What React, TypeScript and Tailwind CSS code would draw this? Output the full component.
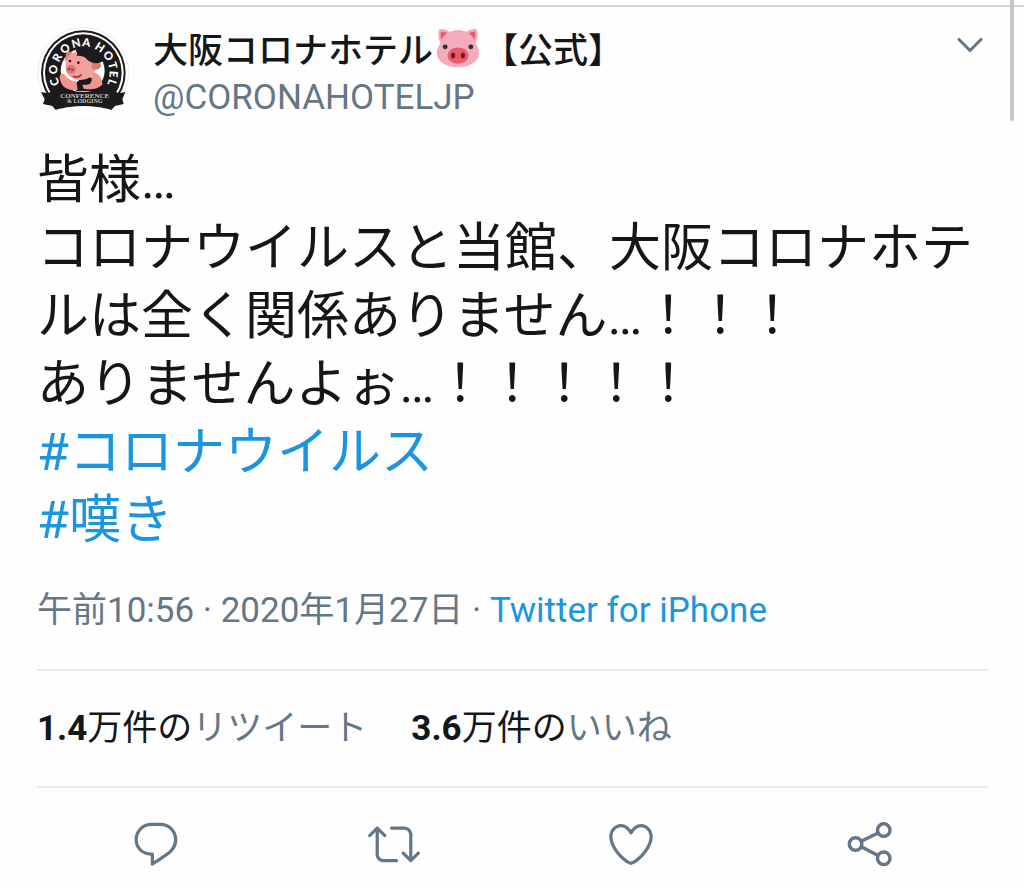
import React from 'react';
import { ChevronDown } from 'lucide-react';

interface Stat {
    count: string;
    unit: string;
    label: string;
}

interface Action {
    label: string;
    icon: React.ReactNode;
}

const bodyLines = [
    '皆様…',
    'コロナウイルスと当館、大阪コロナホテルは全く関係ありません…！！！',
    'ありませんよぉ…！！！！！',
];

const hashtags = ['#コロナウイルス', '#嘆き'];

const stats: Stat[] = [
    { count: '1.4', unit: '万件の', label: 'リツイート' },
    { count: '3.6', unit: '万件の', label: 'いいね' },
];

// Letters around the badge, angle in degrees from the top
const badgeLetters: Array<[string, number]> = [
    ['C', -108],
    ['O', -84],
    ['R', -60],
    ['O', -37],
    ['N', -14],
    ['A', 6],
    ['H', 33],
    ['O', 56],
    ['T', 76],
    ['E', 93],
    ['L', 109],
];

const Avatar: React.FC = () => (
    <svg viewBox="18 21 276 276" className="size-[92px] shrink-0" role="img" aria-label="大阪コロナホテル">
        <circle cx="157" cy="158" r="136" fill="#fff" stroke="#ececec" strokeWidth="3" />
        <circle cx="157" cy="158" r="127" fill="#1d1a1b" />
        <circle cx="157" cy="158" r="121" fill="#fff" />
        <circle cx="157" cy="158" r="115" fill="#1d1a1b" />
        <circle cx="155" cy="152" r="66" fill="#fff" />
        {/* Pig */}
        <path d="M132 200c4-18 20-28 40-28 22 0 38 10 44 30l-10 12h-70z" fill="#1d1a1b" />
        <path d="M88 164c6-8 14 0 18 6 8 8 16 14 30 14l4 26c-26 4-46-8-50-24-4-8-6-16-2-22z" fill="#f0958f" />
        <path d="M182 158c18-4 32 12 32 36-14 14-36 16-56 12l-4-12c16 2 26-2 28-12z" fill="#f0958f" />
        <path d="M101 124l6-34 28 14z" fill="#dd7773" />
        <path d="M116 104c24-18 72-6 78 26 4 28-16 50-46 50-28 0-44-16-44-42 0-16 4-26 12-34z" fill="#f2a09b" />
        <path d="M184 126c14-6 26 2 26 12-4 12-18 14-28 8z" fill="#dd7773" />
        <path d="M134 92c14-22 56-24 70 4 8 4 12 14 12 28-16 10-38 6-50-8-8-8-20-10-30-8 4-6 4-10-2-16z" fill="#1d1a1b" />
        <ellipse cx="120" cy="148" rx="15" ry="13" fill="#dd7773" />
        <circle cx="115" cy="147" r="3" fill="#6f2f2f" />
        <circle cx="124" cy="149" r="3" fill="#6f2f2f" />
        <circle cx="117" cy="123" r="4" fill="#1d1a1b" />
        <circle cx="142" cy="128" r="4" fill="#1d1a1b" />
        <path d="M126 168q14 8 26-4" fill="none" stroke="#a3333a" strokeWidth="5" />
        {/* Ribbon */}
        <path d="M30 216l20 4 16-8q91 8 182 0l16 8 19-4-9 22 4 14-26 6-11 12q-83-24-167 0l-10-12-28-6 5-14z" fill="#1d1a1b" />
        <path d="M74 270q83-24 167 0-34 24-84 24t-83-24z" fill="#fff" />
        {badgeLetters.map(([letter, angle], i) => (
            <text
                key={i}
                x="157"
                y="79"
                textAnchor="middle"
                transform={`rotate(${angle} 157 158)`}
                fill="#fff"
                className="font-['Lato',sans-serif] text-[34px] font-black"
            >
                {letter}
            </text>
        ))}
        <text x="161" y="233" textAnchor="middle" fill="#c9c5c3" className="font-['Liberation_Serif',serif] text-[21px] font-bold">
            CONFERENCE
        </text>
        <text x="161" y="249" textAnchor="middle" fill="#c9c5c3" className="font-['Liberation_Serif',serif] text-[18px] font-bold">
            &amp; LODGING
        </text>
    </svg>
);

const PigEmoji: React.FC = () => (
    <svg viewBox="0 0 36 36" className="mx-1 mb-2 size-[42px] shrink-0" role="img" aria-label="ブタ">
        <path d="M34.2 2.4c-.8-1.4-6.2-.6-9.5 2l8.2 9.6c2-3.2 2.6-9.3 1.3-11.6zM1.8 2.4c.8-1.4 6.2-.6 9.5 2L3.1 14C1.1 10.800.5 4.7 1.8 2.4z" fill="#f4abba" />
        <path d="M32.5 4.1c-1.500-.4-4.400.3-6.200 1.600l5.600 5.800c1-2.200 1.200-5.600.6-7.400zM3.500 4.100c1.500-.4 4.400.3 6.200 1.600l-5.600 5.800c-1-2.200-1.200-5.600-.6-7.400z" fill="#ea596e" />
        <path d="M18 2.500C26 2.500 33 8 33.500 15c2 2 2.500 5 2.500 7.500C36 29.500 28.500 34.500 18 34.500S0 29.500 0 22.500C0 20 .5 17 2.500 15 3 8 10 2.500 18 2.500z" fill="#f4abba" />
        <circle cx="7" cy="17" r="2.1" fill="#292f33" />
        <circle cx="29" cy="17" r="2.1" fill="#292f33" />
        <ellipse cx="18" cy="24.5" rx="9" ry="7" fill="#ea596e" />
        <ellipse cx="13.8" cy="24.5" rx="1.8" ry="2.6" fill="#662113" />
        <ellipse cx="22.2" cy="24.5" rx="1.8" ry="2.6" fill="#662113" />
    </svg>
);

const actions: Action[] = [
    {
        label: '返信',
        icon: (
            <path d="M14.046 2.242l-4.148-.01h-.002c-4.374 0-7.8 3.427-7.8 7.802 0 4.098 3.186 7.206 7.465 7.37v3.828c0 .108.044.286.12.403.142.225.384.347.632.347.138 0 .277-.038.402-.118.264-.168 6.473-4.14 8.088-5.506 1.902-1.61 3.04-3.97 3.043-6.312v-.017c-.006-4.367-3.43-7.787-7.8-7.788zm3.787 12.972c-1.134.96-4.862 3.405-6.772 4.643V16.67c0-.414-.335-.75-.75-.75h-.396c-3.66 0-6.318-2.476-6.318-5.886 0-3.534 2.768-6.302 6.3-6.302l4.147.01h.002c3.532 0 6.3 2.766 6.302 6.296-.003 1.91-.942 3.844-2.514 5.176z" />
        ),
    },
    {
        label: 'リツイート',
        icon: (
            <path d="M23.77 15.67c-.292-.293-.767-.293-1.06 0l-2.22 2.22V7.65c0-2.068-1.683-3.75-3.75-3.75h-5.85c-.414 0-.75.336-.75.75s.336.75.75.75h5.85c1.24 0 2.25 1.01 2.25 2.25v10.24l-2.22-2.22c-.293-.293-.768-.293-1.06 0s-.294.768 0 1.06l3.5 3.5c.145.147.337.22.53.22s.383-.072.53-.22l3.5-3.5c.294-.292.294-.767 0-1.06zm-10.66 3.28H7.26c-1.24 0-2.25-1.01-2.25-2.25V6.46l2.22 2.22c.148.147.34.22.532.22s.384-.073.53-.22c.293-.293.293-.768 0-1.06l-3.5-3.5c-.293-.294-.768-.294-1.06 0l-3.5 3.5c-.294.292-.294.767 0 1.06s.767.293 1.06 0l2.22-2.22V16.7c0 2.068 1.683 3.75 3.75 3.75h5.85c.414 0 .75-.336.75-.75s-.337-.75-.75-.75z" />
        ),
    },
    {
        label: 'いいね',
        icon: (
            <path d="M12 21.638h-.014C9.403 21.59 1.95 14.856 1.95 8.478c0-3.064 2.525-5.754 5.403-5.754 2.29 0 3.83 1.58 4.646 2.73.814-1.148 2.354-2.73 4.645-2.73 2.88 0 5.404 2.69 5.404 5.755 0 6.376-7.454 13.11-10.037 13.157H12zM7.354 4.225c-2.08 0-3.903 1.988-3.903 4.255 0 5.74 7.034 11.596 8.55 11.658 1.518-.062 8.55-5.917 8.55-11.658 0-2.267-1.823-4.255-3.903-4.255-2.528 0-3.94 2.936-3.952 2.965-.23.562-1.156.562-1.387 0-.014-.03-1.425-2.965-3.954-2.965z" />
        ),
    },
    {
        label: '共有',
        icon: (
            <g fill="none" stroke="currentColor" strokeWidth="1.6">
                <circle cx="5.8" cy="12" r="2.9" />
                <circle cx="18.8" cy="5.6" r="2.9" />
                <circle cx="18.8" cy="18.6" r="2.9" />
                <path d="M8.4 10.7l7.8-3.8M8.4 13.3l7.8 4" />
            </g>
        ),
    },
];

const App: React.FC = () => {
    return (
        <div
            lang="ja"
            className="relative min-h-screen bg-[#fefefe] pt-[5px] font-['Roboto','Noto_Sans_CJK_JP',sans-serif] text-[#14171a]"
        >
            {/* Scroll indicator */}
            <div className="absolute top-0 right-[10px] h-[121px] w-1 rounded-b-full bg-[#c6c7c8]"></div>

            <article className="border-t-2 border-[#ccd6dd] pt-5 pr-9 pl-[37px]">
                <header className="flex items-start gap-6">
                    <Avatar />
                    <div className="min-w-0 flex-1 pt-0.5">
                        <h1 className="flex h-[46px] items-center text-[35px] leading-[46px] font-medium">
                            <span>大阪コロナホテル</span>
                            <PigEmoji />
                            <span>【公式】</span>
                        </h1>
                        <p className="text-[35px] leading-[46px] text-[#657786]">@CORONAHOTELJP</p>
                    </div>
                    <button type="button" aria-label="メニュー" className="-mt-1 -mr-1 text-[#657786]">
                        <ChevronDown className="size-11" strokeWidth={1.7} />
                    </button>
                </header>

                <div className="mt-[26px] text-[52px] leading-[68px]">
                    {bodyLines.map((line) => (
                        <p key={line}>{line}</p>
                    ))}
                    {hashtags.map((tag) => (
                        <p key={tag}>
                            <a href="#" className="text-[#1b95e0]">{tag}</a>
                        </p>
                    ))}
                </div>

                <p className="mt-[34px] border-b-2 border-[#e6ecf0] pb-9 text-[35px] leading-[44px] text-[#657786]">
                    午前10:56 · 2020年1月27日 ·{' '}
                    <a href="#" className="text-[#1b95e0]">Twitter for iPhone</a>
                </p>

                <div className="flex gap-11 border-b-2 border-[#e6ecf0] pt-9 pb-[35px] text-[35px] leading-[44px]">
                    {stats.map((stat) => (
                        <a key={stat.label} href="#">
                            <span className="font-bold">{stat.count}</span>
                            <span>{stat.unit}</span>
                            <span className="text-[#657786]">{stat.label}</span>
                        </a>
                    ))}
                </div>

                <div className="grid grid-cols-4 justify-items-center pt-[30px]">
                    {actions.map((action) => (
                        <button key={action.label} type="button" aria-label={action.label} className="text-[#657786]">
                            <svg viewBox="0 0 24 24" className="size-[52px] fill-current">
                                {action.icon}
                            </svg>
                        </button>
                    ))}
                </div>
            </article>
        </div>
    );
};

export default App;
